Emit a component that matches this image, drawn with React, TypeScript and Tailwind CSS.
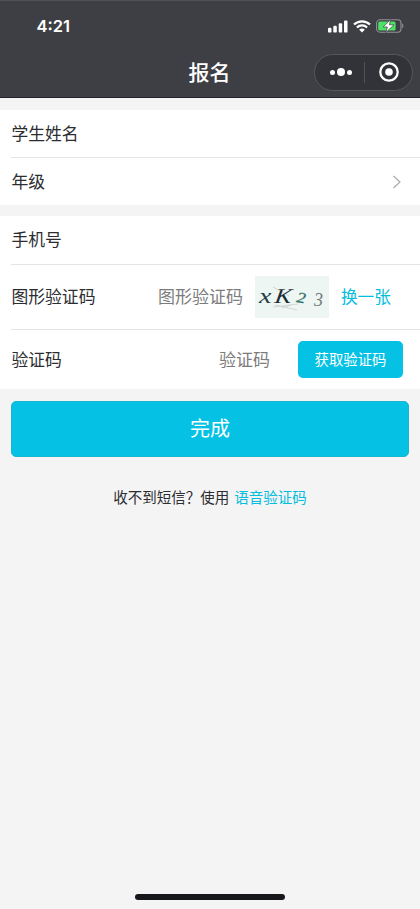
import React from 'react';

interface IFormRow {
  label: string;
  className?: string;
  divider?: boolean;
  children?: React.ReactNode;
}

// Signal strength bars
const SignalIcon = () => (
  <svg width="20" height="13" viewBox="0 0 20 13" fill="#fff">
    <rect x="0" y="7.8" width="3.5" height="4.8" rx="1.2" />
    <rect x="5.3" y="5.8" width="3.5" height="6.8" rx="1.2" />
    <rect x="10.7" y="3.2" width="3.5" height="9.4" rx="1.2" />
    <rect x="16" y="0.4" width="3.5" height="12.2" rx="1.2" />
  </svg>
);

const WifiIcon = () => (
  <svg width="18" height="13" viewBox="0 0 18 13" fill="none" stroke="#fff">
    <path d="M1 4.5C5.5 0.2 12.5 0.2 17 4.5" strokeWidth="2.3" />
    <path d="M3.9 7.5C6.8 4.7 11.2 4.7 14.1 7.5" strokeWidth="2.2" />
    <path d="M6.2 9.7C7.8 8.2 10.2 8.2 11.8 9.7L9 12.6Z" fill="#fff" stroke="none" />
  </svg>
);

const BatteryIcon = () => (
  <svg width="28" height="14" viewBox="0 0 28 14">
    <rect x="0.6" y="0.8" width="24.4" height="12.4" rx="3.4" fill="none" stroke="#929396" strokeWidth="1.1" />
    <path d="M26.2 4.6C27.8 5.2 27.8 8.6 26.2 9.2Z" fill="#929396" />
    <rect x="2.2" y="2.4" width="17.4" height="9.2" rx="1.6" fill="#4ce066" />
    <path d="M14.6 0.6L7.2 8H11.4L9.8 13.6L18 5.8H13.4Z" fill="#fff" stroke="#3d3e43" strokeWidth="0.7" />
  </svg>
);

// Mini program capsule menu
const Capsule = () => (
  <div className="flex h-[37px] w-[99px] items-center rounded-full border border-[#56575b] bg-[#323338]">
    <div className="flex flex-1 items-center justify-center gap-[2px] pl-[2px]">
      <span className="size-[5px] rounded-full bg-white" />
      <span className="size-[8px] rounded-full bg-white" />
      <span className="size-[5px] rounded-full bg-white" />
    </div>
    <span className="h-[21px] w-px bg-[#515257]" />
    <div className="flex flex-1 items-center justify-center">
      <svg width="20" height="20" viewBox="0 0 20 20">
        <circle cx="10" cy="10" r="8.7" fill="none" stroke="#fff" strokeWidth="2.3" />
        <circle cx="10" cy="10" r="3.8" fill="#fff" />
      </svg>
    </div>
  </div>
);

const Captcha = () => (
  <svg width="74" height="42" viewBox="0 0 74 42" className="bg-[#edf6f3]" fontFamily="'Liberation Serif', serif" fontStyle="italic">
    <path d="M18 11L34 20M18 31L43 28M20 29L42 34M27 32L36 29" fill="none" stroke="#c9cecd" strokeWidth="0.8" />
    <text transform="translate(4 27) scale(1.4 1)" fontSize="20" fill="#263d43">x</text>
    <text transform="translate(19 27) skewX(-8) scale(1.2 1)" fontSize="21" fill="#1d2c34">K</text>
    <text transform="translate(41 26) rotate(9) scale(1.2 1)" fontSize="15" fill="#347268" stroke="#347268" strokeWidth="0.3">2</text>
    <text x="59" y="30" fontSize="18" fill="#717a79">3</text>
  </svg>
);

const FormRow = ({ label, className = 'h-12', divider = true, children }: IFormRow) => (
  <div className={`ml-[11px] flex items-center ${divider ? 'border-b border-[#e4e4e4]' : ''} ${className}`}>
    <span className="pl-[0.5px] text-[16.8px] text-[#2c2d31]">{label}</span>
    {children}
  </div>
);

const App = () => {
  return (
    <div className="flex h-[909px] w-[420px] flex-col bg-[#f4f4f4] font-['Noto_Sans_CJK_SC',sans-serif]">
      <header className="h-[98px] border-t border-b border-t-[#505155] border-b-[#222327] bg-[#3e3f44] text-white">
        <div className="flex h-[50px] items-center pr-[16px] pl-[36.5px]">
          <span className="font-['Inter',sans-serif] text-[16.5px] font-semibold">4:21</span>
          <div className="ml-auto flex items-center gap-[5px]">
            <SignalIcon />
            <WifiIcon />
            <BatteryIcon />
          </div>
        </div>
        <div className="grid h-[42px] grid-cols-[1fr_auto_1fr] items-center pr-[7px] pl-[6px]">
          <h1 className="col-start-2 text-[21px] font-medium">报名</h1>
          <div className="flex justify-end">
            <Capsule />
          </div>
        </div>
      </header>

      <main className="flex flex-col">
        <section className="mt-3 bg-white">
          <FormRow label="学生姓名" />
          <FormRow label="年级" className="h-[47px]" divider={false}>
            <svg className="mr-[18px] ml-auto" width="10" height="14" viewBox="0 0 10 14" fill="none" stroke="#a6a6a6" strokeWidth="1.1">
              <path d="M1.5 1L8 7L1.5 13" />
            </svg>
          </FormRow>
        </section>

        <section className="mt-[11px] bg-white">
          <FormRow label="手机号" className="h-[49px]" />
          <FormRow label="图形验证码" className="h-[65px]">
            <span className="ml-auto pb-[2px] text-[17px] text-[#7c7c7c]">图形验证码</span>
            <div className="mr-3 ml-3">
              <Captcha />
            </div>
            <button className="mr-[29px] text-[16.7px] text-[#05bddd]">换一张</button>
          </FormRow>
          <FormRow label="验证码" className="h-[59px]" divider={false}>
            <span className="ml-auto pb-px text-[17px] text-[#7c7c7c]">验证码</span>
            <button className="mr-[17px] ml-[28px] h-[37px] w-[105px] rounded-[5px] bg-[#05c1e3] pb-[2px] text-[14.4px] text-white">
              获取验证码
            </button>
          </FormRow>
        </section>

        <button className="mx-[11px] mt-[12px] h-14 rounded-[5px] border border-[#18b6d2] bg-[#05c1e3] pb-[2px] text-[20px] text-white">
          完成
        </button>

        <p className="mt-[29px] flex justify-center text-[14.5px] leading-[22px] text-[#2c2d31]">
          <span>收不到短信？使用</span>
          <a className="ml-[5px] text-[#05bddd]">语音验证码</a>
        </p>
      </main>

      <div className="mx-auto mt-auto mb-[9px] h-[6px] w-[150px] rounded-full bg-[#17181c]" />
    </div>
  );
};

export default App;
